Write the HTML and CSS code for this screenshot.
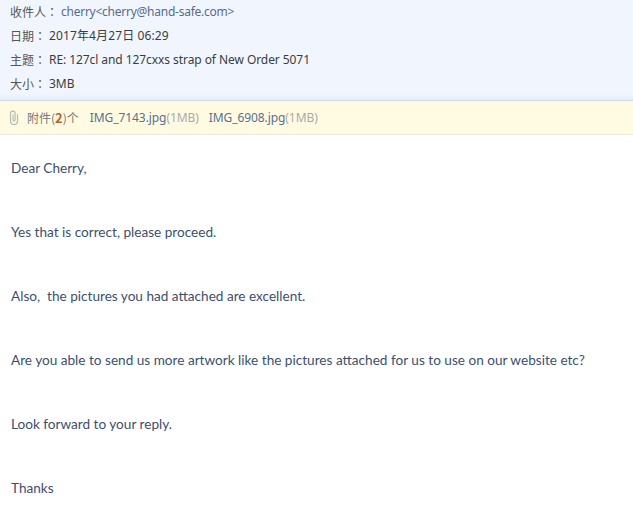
FILE: index.html
```html
<!DOCTYPE html>
<html lang="zh-TW">
<head>
  <meta charset="UTF-8" />
  <title>邮件</title>
  <link rel="stylesheet" href="styles.css">
</head>
<body>

  <div class="mail-head">
    <div class="head-row"><span class="label wide">收件人：</span><span class="sender">cherry&lt;cherry@hand-safe.com&gt;</span></div>
    <div class="head-row"><span class="label">日期：</span><span class="date">2017年4月27日 06:29</span></div>
    <div class="head-row"><span class="label">主题：</span><span class="subject">RE: 127cl and 127cxxs strap of New Order 5071</span></div>
    <div class="head-row"><span class="label">大小：</span><span>3MB</span></div>
  </div>

  <div class="attach-bar">
    <svg class="clip" width="10" height="15" viewBox="0 0 10 15" fill="none" stroke="#b9b9b0" stroke-width="1.2">
      <path d="M8.5 4v7a3.5 3.5 0 0 1-7 0V3.5a2.3 2.3 0 0 1 4.6 0V10a1 1 0 0 1-2 0V4.5" />
    </svg>
    <span class="attach-count">附件(<b>2</b>)个</span>
    <span class="attach-file">IMG_7143.jpg<i>(1MB)</i></span>
    <span class="attach-file">IMG_6908.jpg<i>(1MB)</i></span>
  </div>

  <div class="mail-body">
    <p>Dear Cherry,</p>
    <p>Yes that is correct, please proceed.</p>
    <p>Also,&nbsp; the pictures you had attached are excellent.</p>
    <p>Are you able to send us more artwork like the pictures attached for us to use on our website etc?</p>
    <p>Look forward to your reply.</p>
    <p>Thanks</p>
  </div>

</body>
</html>
```

FILE: styles.css
```css
body {
  margin: 0;
  background: #fff;
  color: #3c3c3c;
  font-family: "Noto Sans", "Noto Sans CJK TC", sans-serif;
  font-size: 12px;
}

.mail-head {
  height: 100px;
  padding-left: 10px;
  background: linear-gradient(#f1f6fe 94%, #e6ecf5);
  border-bottom: 1px solid #d5dbe6;
}
.head-row {
  display: flex;
  height: 24px;
  line-height: 24px;
}
.label {
  width: 39px;
  font-family: "Noto Sans CJK TC", sans-serif;
  color: #555;
}
.label.wide {
  width: 51px;
}
.sender {
  color: #566a8e;
  letter-spacing: -0.25px;
}
.date {
  letter-spacing: 0.12px;
}
.subject {
  letter-spacing: -0.07px;
}

.attach-bar {
  display: flex;
  align-items: center;
  height: 33px;
  padding-left: 9px;
  background: #fffbe3;
  border-bottom: 1px solid #e8e8e0;
}
.clip {
  margin-right: 8px;
}
.attach-count {
  margin-right: 11px;
  color: #777;
  font-family: "Noto Sans CJK TC", sans-serif;
}
.attach-count b {
  font-size: 13px;
  color: #c0622d;
}
.attach-file {
  margin-right: 10px;
  color: #5a7093;
  letter-spacing: -0.08px;
}
.attach-file i {
  font-style: normal;
  color: #aaa;
}

.mail-body {
  display: flex;
  flex-direction: column;
  gap: 44px;
  height: 373px;
  padding: 23px 11px 0;
  box-sizing: border-box;
  color: #3d4f70;
  font-family: "Lato", sans-serif;
  font-size: 13.6px;
}
.mail-body p {
  margin: 0;
  line-height: 20px;
}
```
